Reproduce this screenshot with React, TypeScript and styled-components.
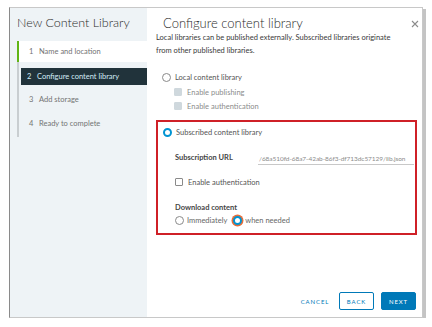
import React from "react";
import styled, { createGlobalStyle } from "styled-components";

const GlobalStyle = createGlobalStyle`
  html, body {
    margin: 0;
    padding: 0;
    background: #fff;
  }
  body {
    font-family: Lato, "Open Sans", sans-serif;
    color: #565656;
  }
`;

const steps = [
  "Name and location",
  "Configure content library",
  "Add storage",
  "Ready to complete",
];

const App = () => {
  const [library, setLibrary] = React.useState("subscribed");
  const [download, setDownload] = React.useState("needed");
  const [auth, setAuth] = React.useState(false);

  return (
    <>
      <GlobalStyle />
      <Dialog>
        <Sidebar>
          <SideTitle>New Content Library</SideTitle>
          <StepList>
            {steps.map((s, i) => (
              <Step key={s} state={i === 0 ? "done" : i === 1 ? "active" : "todo"}>
                <StepNum>{i + 1}</StepNum>
                {s}
              </Step>
            ))}
          </StepList>
        </Sidebar>
        <Main>
          <Header>
            <Title>Configure content library</Title>
            <Close aria-label="close">
              <svg width="8" height="8" viewBox="0 0 8 8">
                <path d="M1 1 L7 7 M7 1 L1 7" stroke="#8c8c8c" strokeWidth="1.1" />
              </svg>
            </Close>
          </Header>
          <Description>
            Local libraries can be published externally. Subscribed libraries originate
            from other published libraries.
          </Description>

          <Option>
            <Radio checked={library === "local"} onClick={() => setLibrary("local")} />
            Local content library
          </Option>
          <SubOption disabled>
            <Check disabled />
            Enable publishing
          </SubOption>
          <SubOption disabled>
            <Check disabled />
            Enable authentication
          </SubOption>

          <Highlight>
            <Option>
              <Radio
                checked={library === "subscribed"}
                onClick={() => setLibrary("subscribed")}
              />
              Subscribed content library
            </Option>
            <FieldRow>
              <FieldLabel>Subscription URL</FieldLabel>
              <UrlInput>/68a510fd-68a7-42ab-86f3-df713dc57129/lib.json</UrlInput>
            </FieldRow>
            <SubOption onClick={() => setAuth(!auth)}>
              <Check />
              Enable authentication
            </SubOption>
            <Group>
              <FieldLabel>Download content</FieldLabel>
              <RadioRow>
                <Inline>
                  <Radio
                    checked={download === "now"}
                    onClick={() => setDownload("now")}
                  />
                  Immediately
                </Inline>
                <Inline>
                  <Radio
                    checked={download === "needed"}
                    focused
                    onClick={() => setDownload("needed")}
                  />
                  when needed
                </Inline>
              </RadioRow>
            </Group>
          </Highlight>

          <Footer>
            <LinkButton>CANCEL</LinkButton>
            <OutlineButton>BACK</OutlineButton>
            <PrimaryButton>NEXT</PrimaryButton>
          </Footer>
        </Main>
      </Dialog>
    </>
  );
};

export default App;

const Dialog = styled.div`
  margin: 7px 0 0 9px;
  width: 414px;
  height: 311px;
  display: flex;
  border: 1px solid #c8c8c8;
  border-left-color: #8a8a8a;
  box-shadow: 3px 2px 0 #c4c4c4;
  background: #fff;
  box-sizing: border-box;
`;

const Sidebar = styled.div`
  width: 137px;
  flex-shrink: 0;
  background: #eef3f6;
  padding-top: 5px;
`;

const SideTitle = styled.div`
  font-family: Lato, sans-serif;
  font-size: 12.5px;
  font-weight: 300;
  color: #2b2b2b;
  padding-left: 7px;
  height: 20px;
  line-height: 20px;
`;

const StepList = styled.div`
  margin: 8px 0 0 7px;
  border-left: 2px solid #c9ced1;
  display: flex;
  flex-direction: column;
`;

const Step = styled.div<{ state: "done" | "active" | "todo" }>`
  height: ${(p) => (p.state === "active" ? "17px" : "21px")};
  margin: ${(p) => (p.state === "active" ? "3px 0 4px 2px" : "0 0 3px 0")};
  margin-left: ${(p) => (p.state === "done" ? "-2px" : p.state === "active" ? "2px" : "0")};
  border-left: ${(p) => (p.state === "done" ? "2px solid #60b515" : "none")};
  background: ${(p) =>
    p.state === "done" ? "#fff" : p.state === "active" ? "#21333b" : "transparent"};
  color: ${(p) => (p.state === "active" ? "#d3ecf7" : "#737373")};
  display: flex;
  align-items: center;
  padding-left: ${(p) => (p.state === "active" ? "6px" : "10px")};
  font-size: 7.5px;
`;

const StepNum = styled.span`
  width: 10px;
`;

const Main = styled.div`
  flex: 1;
  display: flex;
  flex-direction: column;
  padding: 5px 6px 7px 9px;
  min-width: 0;
`;

const Header = styled.div`
  display: flex;
  align-items: center;
  justify-content: space-between;
  height: 20px;
  padding-left: 7px;
`;

const Title = styled.div`
  font-size: 13px;
  font-weight: 300;
  color: #2b2b2b;
`;

const Close = styled.button`
  border: none;
  background: none;
  padding: 0;
  width: 10px;
  height: 10px;
  display: flex;
  align-items: center;
  justify-content: center;
  margin-right: -4px;
  margin-top: 2px;
`;

const Description = styled.p`
  margin: -2px 0 0;
  font-size: 7.5px;
  line-height: 13px;
  color: #3a3a3a;
  width: 250px;
`;

const Option = styled.label`
  display: flex;
  align-items: center;
  gap: 4px;
  font-size: 7.5px;
  color: #555;
  height: 10px;
  margin-top: 15px;
  padding-left: 6px;
`;

const SubOption = styled.label<{ disabled?: boolean }>`
  display: flex;
  align-items: center;
  gap: 5px;
  font-size: 7.5px;
  color: ${(p) => (p.disabled ? "#8c8c8c" : "#555")};
  margin-top: ${(p) => (p.disabled ? "6px" : "15px")};
  padding-left: 18px;
  height: 8px;
`;

const Radio = styled.span<{ checked?: boolean; focused?: boolean }>`
  display: inline-block;
  box-sizing: border-box;
  width: 9px;
  height: 9px;
  border-radius: 50%;
  border: ${(p) => (p.checked ? "2.5px solid #0094d2" : "1px solid #8a8a8a")};
  background: #fff;
  box-shadow: ${(p) => (p.focused ? "0 0 0 1.5px #e66e3a" : "none")};
  flex-shrink: 0;
  cursor: pointer;
`;

const Check = styled.span<{ disabled?: boolean }>`
  display: inline-block;
  box-sizing: border-box;
  width: 8px;
  height: 8px;
  border-radius: 1px;
  border: 1px solid ${(p) => (p.disabled ? "#cfd8dd" : "#8a8a8a")};
  background: ${(p) => (p.disabled ? "#cfd8dd" : "#fff")};
  flex-shrink: 0;
`;

const Highlight = styled.div`
  margin-top: 10px;
  width: 261px;
  height: 115px;
  box-sizing: border-box;
  border: 2px solid #cf2027;

  & > ${Option} {
    margin-top: 5px;
    padding-left: 5px;
  }
  & > ${SubOption} {
    padding-left: 17px;
  }
`;

const FieldRow = styled.div`
  display: flex;
  align-items: center;
  height: 10px;
  margin-top: 16px;
  padding-left: 17px;
`;

const FieldLabel = styled.div`
  font-size: 7.5px;
  font-weight: 700;
  color: #454545;
  width: 83px;
  height: 10px;
  line-height: 10px;
`;

const UrlInput = styled.div`
  width: 156px;
  font-size: 6.5px;
  letter-spacing: -0.05px;
  color: #8c8c8c;
  border-bottom: 1px solid #c8c8c8;
  padding: 0 0 2px 1px;
  margin-top: 3px;
  white-space: nowrap;
  overflow: hidden;
  box-sizing: border-box;
`;

const Group = styled.div`
  margin-top: 17px;
  padding-left: 17px;
`;

const RadioRow = styled.div`
  display: flex;
  gap: 6px;
  height: 10px;
  margin-top: 2px;
`;

const Inline = styled.label`
  display: flex;
  align-items: center;
  gap: 3px;
  font-size: 7.5px;
  color: #666;
`;

const Footer = styled.div`
  margin-top: auto;
  display: flex;
  align-items: center;
  justify-content: flex-end;
  gap: 7px;
`;

const ButtonBase = styled.button`
  font-family: Lato, sans-serif;
  font-size: 6px;
  letter-spacing: 0.9px;
  height: 18px;
  width: 35px;
  border-radius: 2px;
  padding: 0;
  box-sizing: border-box;
`;

const LinkButton = styled(ButtonBase)`
  border: none;
  background: none;
  color: #0079b8;
  width: 34px;
`;

const OutlineButton = styled(ButtonBase)`
  border: 1px solid #0079b8;
  background: #fff;
  color: #0079b8;
`;

const PrimaryButton = styled(ButtonBase)`
  border: 1px solid #0079b8;
  background: #0079b8;
  color: #fff;
`;
